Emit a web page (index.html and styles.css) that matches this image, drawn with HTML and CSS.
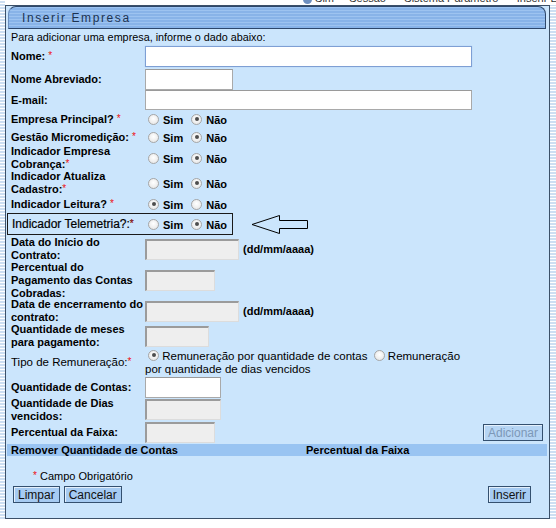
FILE: index.html
```html
<!DOCTYPE html>
<html lang="pt-BR">
<head>
<meta charset="utf-8">
<title>Inserir Empresa</title>
<link rel="stylesheet" href="styles.css">
</head>
<body>
<div class="frame">
  <div class="clip"><span class="clip-text"><span class="mini-radio"></span> Sim &nbsp;&nbsp;&nbsp; Sessão &nbsp;&nbsp;&nbsp;&nbsp; Sistema Parâmetro &nbsp;&nbsp;&nbsp;&nbsp; Inserir Empresa</span></div>
  <div class="panel">
    <div class="header"><span class="title">Inserir Empresa</span></div>
    <div class="form">
      <div class="row h15 intro">Para adicionar uma empresa, informe o dado abaixo:</div>

      <div class="row h24"><div class="lbl">Nome: <span class="req">*</span></div><div class="fld"><input class="inp w327 focus" type="text"></div></div>
      <div class="row h22"><div class="lbl">Nome Abreviado:</div><div class="fld"><input class="inp w87" type="text"></div></div>
      <div class="row h20"><div class="lbl">E-mail:</div><div class="fld"><input class="inp w327 h19" type="text"></div></div>

      <div class="row h18"><div class="lbl">Empresa Principal? <span class="req">*</span></div><div class="fld"><span class="radio"></span><span class="opt">Sim</span><span class="radio on"></span><span class="opt">Não</span></div></div>
      <div class="row h18"><div class="lbl">Gestão Micromedição: <span class="req">*</span></div><div class="fld"><span class="radio"></span><span class="opt">Sim</span><span class="radio on"></span><span class="opt">Não</span></div></div>
      <div class="row h24"><div class="lbl">Indicador Empresa Cobrança:<span class="req">*</span></div><div class="fld"><span class="radio"></span><span class="opt">Sim</span><span class="radio on"></span><span class="opt">Não</span></div></div>
      <div class="row h26"><div class="lbl">Indicador Atualiza Cadastro:<span class="req">*</span></div><div class="fld"><span class="radio"></span><span class="opt">Sim</span><span class="radio on"></span><span class="opt">Não</span></div></div>
      <div class="row h16"><div class="lbl">Indicador Leitura? <span class="req">*</span></div><div class="fld"><span class="radio on"></span><span class="opt">Sim</span><span class="radio"></span><span class="opt">Não</span></div></div>

      <div class="row h24">
        <div class="tele">
          <div class="lbl lbl-tele">Indicador Telemetria?:<span class="req">*</span></div>
          <div class="fld"><span class="radio"></span><span class="opt">Sim</span><span class="radio on"></span><span class="opt">Não</span></div>
        </div>
        <svg class="arrow" width="58" height="21" viewBox="0 0 58 21"><polygon points="1,10.5 28.5,1.5 28.5,6.5 56.5,6.5 56.5,14.5 28.5,14.5 28.5,19.5" fill="none" stroke="#000" stroke-width="1"/></svg>
      </div>

      <div class="row h26"><div class="lbl">Data do Início do Contrato:</div><div class="fld"><input class="inp dis w93" type="text" disabled><span class="hint">(dd/mm/aaaa)</span></div></div>
      <div class="row h36"><div class="lbl">Percentual do Pagamento das Contas Cobradas:</div><div class="fld"><input class="inp dis w69" type="text" disabled></div></div>
      <div class="row h26"><div class="lbl">Data de encerramento do contrato:</div><div class="fld"><input class="inp dis w93" type="text" disabled><span class="hint">(dd/mm/aaaa)</span></div></div>
      <div class="row h24"><div class="lbl">Quantidade de meses para pagamento:</div><div class="fld"><input class="inp dis w63" type="text" disabled></div></div>

      <div class="row h29"><div class="lbl normal">Tipo de Remuneração:<span class="req">*</span></div><div class="fld block"><span class="radio on"></span> Remuneração por quantidade de contas <span class="radio"></span> Remuneração<br>por quantidade de dias vencidos</div></div>

      <div class="row h21"><div class="lbl">Quantidade de Contas:</div><div class="fld"><input class="inp w75" type="text"></div></div>
      <div class="row h23"><div class="lbl">Quantidade de Dias vencidos:</div><div class="fld"><input class="inp dis w75" type="text" disabled></div></div>
      <div class="row h23"><div class="lbl">Percentual da Faixa:</div><div class="fld"><input class="inp dis w69" type="text" disabled></div><button class="btn btn-dis" type="button" disabled>Adicionar</button></div>

      <div class="thead"><span class="th1">Remover Quantidade de Contas</span><span class="th2">Percentual da Faixa</span></div>

      <div class="obrig"><span class="req">*</span> Campo Obrigatório</div>

      <div class="actions">
        <button class="btn" type="button">Limpar</button>
        <button class="btn" type="button">Cancelar</button>
        <button class="btn btn-right" type="button">Inserir</button>
      </div>
    </div>
  </div>
</div>
</body>
</html>
```

FILE: styles.css
```css
html, body {
  margin: 0;
  padding: 0;
  background: #ffffff;
}

body {
  font-family: "Liberation Sans", Arial, sans-serif;
  font-size: 11px;
  color: #000;
  width: 556px;
  height: 528px;
  overflow: hidden;
}

.frame {
  background: repeating-linear-gradient(to bottom, #ffffff 0 1px, #cddff2 1px 3px);
  padding: 0 6px 0 5px;
  width: 556px;
  box-sizing: border-box;
}

.clip {
  height: 5px;
  overflow: hidden;
  background: #fff;
  margin: 0 -6px 0 0;
  padding-left: 298px;
}

.clip-text {
  display: block;
  margin-top: -8px;
  white-space: nowrap;
  font-size: 11px;
  color: #333;
}

.mini-radio {
  display: inline-block;
  width: 9px;
  height: 9px;
  border-radius: 50%;
  background: #6e8fbf;
  vertical-align: middle;
}

.panel {
  background: #cbe5fc;
  border: 1px solid #3c5068;
  height: 514px;
  box-sizing: border-box;
}

.header {
  margin: 0 3px 0 2px;
  height: 23px;
  box-sizing: border-box;
  border: 1px solid #2d476b;
  border-left-color: #6a8fc0;
  border-radius: 8px 8px 0 0;
  background: repeating-linear-gradient(to bottom, #9dc3f0 0 1px, #88b3e8 1px 3px);
  display: flex;
  align-items: center;
  padding-left: 13px;
}

.title {
  font-size: 12px;
  letter-spacing: 1.6px;
  color: #1d3352;
}

.form {
  padding: 0 6px 0 5px;
}

.row {
  display: flex;
  align-items: center;
}

.h15 { height: 15px; }
.h16 { height: 16px; }
.h18 { height: 18px; }
.h20 { height: 20px; }
.h21 { height: 21px; }
.h22 { height: 22px; }
.h23 { height: 23px; }
.h24 { height: 24px; }
.h26 { height: 26px; }
.h29 { height: 29px; }
.h36 { height: 36px; }

.intro {
  font-size: 10.8px;
}

.lbl {
  width: 134px;
  flex: none;
  font-weight: bold;
  line-height: 13px;
}

.lbl.normal {
  font-weight: normal;
  font-size: 11.5px;
}

.req {
  color: #ee1111;
  font-size: 10px;
  font-weight: normal;
  position: relative;
  top: -1px;
}

.fld {
  display: flex;
  align-items: center;
}

.fld.block {
  display: block;
  line-height: 13.5px;
  padding-top: 1px;
  font-size: 11.5px;
}

.inp {
  box-sizing: border-box;
  height: 21px;
  margin: 0;
  padding: 0 2px;
  background: #fff;
  border: 1px solid #a9a9a9;
  border-top-color: #9a9a9a;
  font-family: "Liberation Sans", Arial, sans-serif;
  font-size: 11px;
}

.inp.h19 { height: 20px; }

.inp.focus {
  border-color: #7e9fd4;
  box-shadow: 0 0 1px #a8c4ec;
}

.inp.dis {
  background: #eeeeee;
  border-width: 2px 1px 1px 2px;
  border-color: #9b9b9b #dcdcdc #dcdcdc #9b9b9b;
}

.w327 { width: 327px; }
.w87 { width: 88px; }
.w93 { width: 94px; }
.w75 { width: 76px; }
.w69 { width: 70px; }
.w63 { width: 64px; }

.hint {
  font-weight: bold;
  margin-left: 4px;
}

.radio {
  display: inline-block;
  box-sizing: border-box;
  width: 11px;
  height: 11px;
  border-radius: 50%;
  border: 1px solid #a6a6a6;
  background: radial-gradient(circle at 50% 40%, #ffffff 0, #e2e2e2 100%);
  margin-left: 3px;
  position: relative;
  vertical-align: -1px;
  flex: none;
}

.radio.on::after {
  content: "";
  position: absolute;
  left: 2.5px;
  top: 2.5px;
  width: 4px;
  height: 4px;
  border-radius: 50%;
  background: #4d4d4d;
}

.fld .radio + .opt {
  margin-left: 4px;
}

.opt {
  font-weight: bold;
  margin-right: 5px;
  position: relative;
  top: 1px;
}

.tele {
  display: flex;
  align-items: center;
  box-sizing: border-box;
  width: 226px;
  height: 22px;
  margin-left: -4px;
  padding-left: 4px;
  border: 1px solid #1a1a1a;
}

.lbl-tele {
  width: 133px;
  font-weight: normal;
  font-size: 12px;
  -webkit-text-stroke: 0.2px #000;
}

.arrow {
  margin-left: 18px;
  display: block;
}

.btn {
  font-family: "Liberation Sans", Arial, sans-serif;
  font-size: 12px;
  height: 17px;
  line-height: 14px;
  padding: 0 4px;
  margin: 0;
  color: #111;
  background: #a6cbf2;
  border: 1px solid #34506f;
  box-shadow: inset 1px 1px 0 #e4f0fc;
  border-radius: 0;
}

.btn-dis {
  margin-left: auto;
  color: #7d98b7;
  background: #b6d5f4;
}

.thead {
  display: flex;
  height: 12px;
  line-height: 12px;
  margin: 0 -4px;
  padding-left: 4px;
  background: #99c4f2;
  font-weight: bold;
}

.th1 {
  width: 295px;
}

.obrig {
  height: 12px;
  line-height: 12px;
  margin-top: 14px;
  padding-left: 22px;
}

.actions {
  display: flex;
  gap: 4px;
  margin-top: 4px;
  padding-left: 2px;
  padding-right: 12px;
}

.btn-right {
  margin-left: auto;
}
```
